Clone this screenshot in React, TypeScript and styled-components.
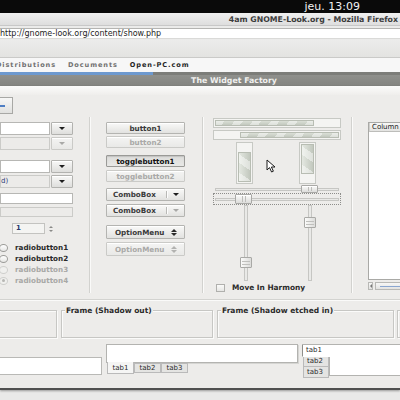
import React from "react";
import styled, { createGlobalStyle, css } from "styled-components";

const Global = createGlobalStyle`
  html, body { margin: 0; padding: 0; background: #e9e9e8; }
  * { box-sizing: border-box; }
`;

const Screen = styled.div`
  position: relative;
  width: 400px;
  height: 400px;
  overflow: hidden;
  background: #e9e9e8;
  font-family: "DejaVu Sans", "Liberation Sans", sans-serif;
  display: flex;
  flex-direction: column;
`;

const TopPanel = styled.div`
  flex: none;
  height: 13px;
  background: #0a0a0a;
  color: #f2f2f2;
  font-size: 11px;
  line-height: 13px;
  display: flex;
  justify-content: flex-end;
  padding-right: 40px;
  white-space: nowrap;
`;

const BrowserTitle = styled.div`
  flex: none;
  height: 13px;
  background: linear-gradient(#f0f0f0, #dedede);
  border-bottom: 1px solid #c8c8c8;
  display: flex;
  justify-content: flex-end;
  align-items: center;
  padding-right: 2px;
  font-size: 7.8px;
  font-weight: bold;
  color: #3c3c3c;
  white-space: nowrap;
`;

const UrlBar = styled.div`
  flex: none;
  height: 14px;
  background: #ebebea;
  padding-top: 2px;
`;

const UrlField = styled.div`
  height: 11px;
  background: #fff;
  border-top: 1px solid #b4b4b2;
  border-bottom: 1px solid #dadad8;
  font-size: 8px;
  line-height: 9px;
  color: #1e1e1e;
  white-space: nowrap;
`;

const Toolbar = styled.div`
  flex: none;
  height: 18px;
  background: linear-gradient(#ececeb, #e3e3e1);
  border-bottom: 1px solid #cacac8;
`;

const Bookmarks = styled.div`
  flex: none;
  height: 14px;
  background: #f7f7f7;
  display: flex;
  align-items: center;
  gap: 12px;
  margin-left: -4px;
  white-space: nowrap;
`;

const Bookmark = styled.span<{ $active?: boolean }>`
  font-size: 6.6px;
  font-weight: bold;
  letter-spacing: 0.9px;
  color: ${(p) => (p.$active ? "#1f1f1f" : "#707070")};
`;

const LoadStrip = styled.div`
  flex: none;
  height: 3px;
  background: #7c7d79;
  display: flex;
`;

const LoadBlue = styled.div`
  width: 153px;
  background: #6d99cf;
`;

const WindowTitle = styled.div`
  flex: none;
  height: 11px;
  background: linear-gradient(#8f908c, #838480);
  color: #f1f1ef;
  font-size: 7.8px;
  font-weight: bold;
  display: flex;
  justify-content: center;
  align-items: center;
  padding-left: 68px;
  white-space: nowrap;
`;

const WindowBody = styled.div`
  flex: none;
  height: 304px;
  background: #edecea;
  border-bottom: 2px solid #505050;
  box-shadow: 0 1px 2px rgba(0, 0, 0, 0.35);
  display: flex;
  flex-direction: column;
  color: #2b2b2b;
  font-size: 7.2px;
  font-weight: bold;
`;

const MenuStrip = styled.div`
  flex: none;
  height: 9px;
  background: linear-gradient(#fbfbfa, #efeeec);
`;

const ToolRow = styled.div`
  flex: none;
  height: 22px;
  display: flex;
  align-items: flex-start;
  padding-top: 2px;
`;

const ToolBtn = styled.div`
  margin-left: -8px;
  width: 21px;
  height: 17px;
  border: 1px solid #a8a8a5;
  background: linear-gradient(#f7f7f6, #e1e1df);
  display: flex;
  align-items: center;
  padding-left: 6px;
`;

const BlueDash = styled.div`
  width: 6px;
  height: 2px;
  background: #4f7fc4;
`;

const MainRow = styled.div`
  flex: none;
  height: 176px;
  display: flex;
`;

const VSep = styled.div<{ $ml: number; $mr: number }>`
  flex: none;
  width: 2px;
  margin-left: ${(p) => p.$ml}px;
  margin-right: ${(p) => p.$mr}px;
  border-left: 1px solid #d2d2cf;
  border-right: 1px solid #fafaf9;
`;

const Column = styled.div<{ $w?: number }>`
  flex: ${(p) => (p.$w ? "none" : "1")};
  width: ${(p) => (p.$w ? `${p.$w}px` : "auto")};
  display: flex;
  flex-direction: column;
  min-width: 0;
`;

/* ---------- left column ---------- */

const ComboRow = styled.div<{ $mt: number }>`
  display: flex;
  gap: 1px;
  height: 13px;
  margin-top: ${(p) => p.$mt}px;
`;

const Field = styled.div<{ $w: number; $h?: number; $off?: boolean; $mt?: number }>`
  flex: none;
  width: ${(p) => p.$w}px;
  height: ${(p) => p.$h ?? 13}px;
  margin-top: ${(p) => p.$mt ?? 0}px;
  background: ${(p) => (p.$off ? "#ecebe9" : "#ffffff")};
  border: 1px solid ${(p) => (p.$off ? "#cbcbc8" : "#b7b7b4")};
  font-size: 7px;
  font-weight: normal;
  color: #2d3f78;
  line-height: 11px;
  white-space: nowrap;
  overflow: hidden;
`;

const DropBtn = styled.div<{ $off?: boolean }>`
  flex: none;
  width: 22px;
  height: 13px;
  border: 1px solid ${(p) => (p.$off ? "#cacac7" : "#b2b2af")};
  border-radius: 1px;
  background: ${(p) =>
    p.$off ? "linear-gradient(#f3f3f2, #e8e8e6)" : "linear-gradient(#f8f8f7, #dededc)"};
  box-shadow: inset 0 1px #fff;
  display: flex;
  align-items: center;
  justify-content: center;
`;

const DownArrow = styled.div<{ $off?: boolean }>`
  width: 0;
  height: 0;
  border-left: 3px solid transparent;
  border-right: 3px solid transparent;
  border-top: 3px solid ${(p) => (p.$off ? "#a9a9a7" : "#1e1e1e")};
`;

const SpinRow = styled.div`
  display: flex;
  align-items: center;
  height: 11px;
  margin-top: 6px;
  padding-left: 12px;
  gap: 4px;
`;

const SpinField = styled.div`
  width: 33px;
  height: 11px;
  background: #f4f4f2;
  border: 1px solid #c3c3c0;
  font-size: 7px;
  font-weight: bold;
  color: #2a3a6e;
  line-height: 9px;
  padding-left: 3px;
`;

const SpinArrows = styled.div`
  display: flex;
  flex-direction: column;
  gap: 2px;
`;

const TinyTri = styled.div<{ $up?: boolean; $color?: string }>`
  width: 0;
  height: 0;
  border-left: 2px solid transparent;
  border-right: 2px solid transparent;
  ${(p) =>
    p.$up
      ? css`border-bottom: 2px solid ${p.$color ?? "#8a8a88"};`
      : css`border-top: 2px solid ${p.$color ?? "#8a8a88"};`}
`;

const RadioList = styled.div`
  margin-top: 8px;
  margin-left: -1px;
  display: flex;
  flex-direction: column;
`;

const RadioRow = styled.div<{ $off?: boolean }>`
  height: 11px;
  display: flex;
  align-items: center;
  gap: 7px;
  color: ${(p) => (p.$off ? "#a8a8a6" : "#2a2a2a")};
`;

const RadioDot = styled.div<{ $off?: boolean; $on?: boolean }>`
  width: 9px;
  height: 8px;
  border-radius: 50%;
  border: 1px solid ${(p) => (p.$off ? "#cfcfcc" : "#9c9c99")};
  background: ${(p) => (p.$off ? "#f0f0ee" : "linear-gradient(#ffffff, #e6e6e4)")};
  display: flex;
  align-items: center;
  justify-content: center;
  &::after {
    content: "";
    width: 3px;
    height: 3px;
    border-radius: 50%;
    background: ${(p) => (p.$on ? "#b7b7b4" : "transparent")};
  }
`;

/* ---------- middle column ---------- */

const Button = styled.div<{ $mt: number; $h?: number; $off?: boolean; $pressed?: boolean }>`
  height: ${(p) => p.$h ?? 12}px;
  margin-top: ${(p) => p.$mt}px;
  border: 1px solid ${(p) => (p.$pressed ? "#9a9a97" : p.$off ? "#cacac7" : "#b4b4b1")};
  border-radius: 1px;
  background: ${(p) =>
    p.$pressed
      ? "linear-gradient(#dcdcda, #e8e8e6)"
      : p.$off
      ? "linear-gradient(#f4f4f3, #e9e9e7)"
      : "linear-gradient(#f9f9f8, #e2e2e0)"};
  box-shadow: ${(p) => (p.$pressed ? "inset 0 1px 1px rgba(0,0,0,0.12)" : "inset 0 1px #fff")};
  color: ${(p) => (p.$off ? "#a9a9a7" : p.$pressed ? "#121212" : "#3a3a3a")};
  font-size: 7.2px;
  display: flex;
  align-items: center;
  justify-content: center;
  white-space: nowrap;
`;

const ComboBtn = styled(Button)`
  justify-content: flex-start;
  padding-left: 6px;
`;

const ComboLabel = styled.span`
  flex: 1;
`;

const ComboSep = styled.div`
  align-self: stretch;
  margin: 2px 0;
  width: 2px;
  border-left: 1px solid #b9b9b6;
  border-right: 1px solid #fdfdfd;
`;

const ComboArrowBox = styled.div`
  width: 16px;
  display: flex;
  justify-content: center;
`;

const OptionBtn = styled(Button)`
  justify-content: space-between;
  padding: 0 7px 0 8px;
`;

const UpDown = styled.div`
  display: flex;
  flex-direction: column;
  gap: 1px;
`;

const MidTri = styled.div<{ $up?: boolean; $off?: boolean }>`
  width: 0;
  height: 0;
  border-left: 3px solid transparent;
  border-right: 3px solid transparent;
  ${(p) =>
    p.$up
      ? css`border-bottom: 3px solid ${p.$off ? "#b2b2b0" : "#2a2a2a"};`
      : css`border-top: 3px solid ${p.$off ? "#b2b2b0" : "#2a2a2a"};`}
`;

/* ---------- sliders column ---------- */

const fillPattern = css`
  background: repeating-linear-gradient(
      125deg,
      rgba(255, 255, 255, 0.45) 0 7px,
      rgba(255, 255, 255, 0) 7px 15px
    ),
    linear-gradient(#dadfd6, #c2c8be);
`;

const fillPatternV = css`
  background: repeating-linear-gradient(
      35deg,
      rgba(255, 255, 255, 0.45) 0 7px,
      rgba(255, 255, 255, 0) 7px 15px
    ),
    linear-gradient(90deg, #e4e8e1, #c2c8be);
`;

const HProgress = styled.div<{ $mt: number; $rtl?: boolean }>`
  height: 10px;
  margin-top: ${(p) => p.$mt}px;
  border: 1px solid #c7c9c4;
  background: #f4f4f2;
  display: flex;
  justify-content: ${(p) => (p.$rtl ? "flex-end" : "flex-start")};
  padding: 1px;
`;

const HFill = styled.div`
  height: 100%;
  border: 1px solid #b8bdb3;
  ${fillPattern}
`;

const VProgRow = styled.div`
  height: 42px;
  margin-top: 2px;
  display: flex;
  padding-left: 23px;
  gap: 46px;
`;

const VProgress = styled.div<{ $fromTop?: boolean }>`
  width: 17px;
  height: 42px;
  border: 1px solid #c7c9c4;
  background: #f4f4f2;
  display: flex;
  flex-direction: column;
  justify-content: ${(p) => (p.$fromTop ? "flex-start" : "flex-end")};
  padding: 1px;
`;

const VFill = styled.div`
  width: 100%;
  border: 1px solid #b8bdb3;
  ${fillPatternV}
`;

const HScale = styled.div<{ $mt?: number }>`
  position: relative;
  height: 8px;
  margin-top: ${(p) => p.$mt ?? 0}px;
  display: flex;
  align-items: center;
  padding: 0 2px;
`;

const HTrough = styled.div`
  flex: 1;
  height: 3px;
  border: 1px solid #c6c6c3;
  background: #e9e9e7;
`;

const HHandle = styled.div<{ $w?: number; $h?: number }>`
  position: absolute;
  top: 0;
  width: ${(p) => p.$w ?? 17}px;
  height: ${(p) => p.$h ?? 8}px;
  border: 1px solid #a9a9a6;
  border-radius: 1px;
  background: linear-gradient(#fbfbfa, #dcdcda);
  box-shadow: inset 0 1px #fff;
  display: flex;
  justify-content: center;
  gap: 2px;
  padding: 1px 0;
  &::before,
  &::after {
    content: "";
    width: 1px;
    background: #bdbdba;
  }
`;

const FocusBox = styled.div`
  height: 12px;
  border: 1px dotted #8e8e8b;
  position: relative;
  display: flex;
  align-items: center;
  padding: 0 1px;
`;

const VScales = styled.div`
  height: 76px;
  display: flex;
  padding-left: 27px;
  gap: 52px;
`;

const VScale = styled.div`
  position: relative;
  width: 12px;
  height: 76px;
  display: flex;
  justify-content: center;
`;

const VTrough = styled.div`
  width: 4px;
  height: 100%;
  border: 1px solid #c6c6c3;
  background: #e9e9e7;
`;

const VHandle = styled.div`
  position: absolute;
  left: 0;
  width: 12px;
  height: 11px;
  border: 1px solid #a9a9a6;
  border-radius: 1px;
  background: linear-gradient(90deg, #fbfbfa, #dcdcda);
  display: flex;
  flex-direction: column;
  justify-content: center;
  gap: 2px;
  padding: 0 1px;
  &::before,
  &::after {
    content: "";
    height: 1px;
    background: #c0c0bd;
  }
`;

const CheckRow = styled.div`
  height: 9px;
  margin-top: 2px;
  display: flex;
  align-items: center;
  gap: 7px;
  padding-left: 3px;
  font-size: 7.4px;
  color: #2b2b2b;
  white-space: nowrap;
`;

const CheckBox = styled.div`
  width: 9px;
  height: 8px;
  border: 1px solid #b0b0ad;
  background: linear-gradient(#fafaf9, #e6e6e4);
`;

/* ---------- tree column ---------- */

const TreeBox = styled.div`
  margin-top: 5px;
  height: 158px;
  border: 1px solid #a9a9a6;
  border-right: none;
  background: #fff;
  display: flex;
  flex-direction: column;
`;

const TreeHeader = styled.div`
  height: 9px;
  background: linear-gradient(#f7f7f6, #e3e3e1);
  border-bottom: 1px solid #bdbdba;
  border-left: 1px solid #cfcfcc;
  font-size: 7px;
  font-weight: normal;
  color: #222;
  line-height: 8px;
  padding-left: 2px;
  white-space: nowrap;
`;

const ScrollBar = styled.div`
  margin-top: 2px;
  height: 8px;
  display: flex;
  gap: 2px;
`;

const ScrollBtn = styled.div`
  width: 13px;
  border: 1px solid #b8b8b5;
  background: linear-gradient(#f7f7f6, #e2e2e0);
  display: flex;
  align-items: center;
  justify-content: center;
`;

const LeftTri = styled.div`
  width: 0;
  height: 0;
  border-top: 2px solid transparent;
  border-bottom: 2px solid transparent;
  border-right: 2px solid #777;
`;

const ScrollThumb = styled.div`
  flex: 1;
  border: 1px solid #b8b8b5;
  border-right: none;
  background: linear-gradient(#f7f7f6, #e2e2e0);
  display: flex;
  align-items: center;
  padding-left: 4px;
  &::after {
    content: "";
    width: 20px;
    height: 1px;
    background: #8aa6d0;
  }
`;

/* ---------- bottom ---------- */

const HRule = styled.div`
  flex: none;
  margin-top: 6px;
  height: 2px;
  border-top: 1px solid #d3d3d0;
  border-bottom: 1px solid #fafaf9;
`;

const FramesRow = styled.div`
  flex: none;
  margin-top: 9px;
  height: 28px;
  display: flex;
  margin-left: -10px;
`;

const Frame = styled.div<{ $w: number; $ml: number }>`
  position: relative;
  flex: none;
  width: ${(p) => p.$w}px;
  margin-left: ${(p) => p.$ml}px;
  border: 1px solid #c7c7c4;
  box-shadow: inset 1px 1px #fbfbfa, 1px 1px #fbfbfa;
`;

const FrameLabel = styled.span`
  position: absolute;
  top: -5px;
  left: 3px;
  padding: 0 1px;
  background: #edecea;
  font-size: 7.5px;
  line-height: 9px;
  color: #2b2b2b;
  white-space: nowrap;
`;

const NotebookRow = styled.div`
  flex: none;
  margin-top: 6px;
  height: 34px;
  display: flex;
  margin-left: -5px;
`;

const BottomEntry = styled.div`
  flex: none;
  width: 107px;
  height: 18px;
  margin-top: 13px;
  background: #fff;
  border: 1px solid #b9b9b6;
`;

const NotebookBottom = styled.div`
  flex: none;
  margin-left: 4px;
  width: 192px;
  display: flex;
  flex-direction: column;
`;

const NbPage = styled.div<{ $h?: number }>`
  height: ${(p) => (p.$h ? `${p.$h}px` : "auto")};
  flex: ${(p) => (p.$h ? "none" : "1")};
  background: #fff;
  border: 1px solid #b3b3b0;
  box-shadow: 1px 1px #d5d5d2;
`;

const TabStrip = styled.div`
  display: flex;
  padding-left: 1px;
  align-items: flex-start;
`;

const Tab = styled.div<{ $active?: boolean }>`
  width: 27px;
  height: ${(p) => (p.$active ? 12 : 10)}px;
  margin-top: ${(p) => (p.$active ? -1 : 0)}px;
  background: ${(p) => (p.$active ? "#f5f5f4" : "#e4e4e2")};
  border: 1px solid #bababa;
  border-top: ${(p) => (p.$active ? "none" : "1px solid #bababa")};
  font-size: 7px;
  font-weight: normal;
  color: #2b2b2b;
  display: flex;
  align-items: ${(p) => (p.$active ? "flex-end" : "center")};
  justify-content: center;
  padding-bottom: ${(p) => (p.$active ? 1 : 0)}px;
`;

const NotebookSide = styled.div`
  flex: none;
  margin-left: 4px;
  flex-grow: 1;
  display: flex;
  border-top: 1px solid #b3b3b0;
`;

const SideTabs = styled.div`
  flex: none;
  width: 27px;
  display: flex;
  flex-direction: column;
`;

const SideTab = styled.div<{ $active?: boolean }>`
  height: ${(p) => (p.$active ? 12 : 11)}px;
  margin-left: ${(p) => (p.$active ? 0 : 1)}px;
  background: ${(p) => (p.$active ? "#fff" : "#e4e4e2")};
  border-left: 1px solid ${(p) => (p.$active ? "#8e8e8b" : "#bababa")};
  border-bottom: 1px solid ${(p) => (p.$active ? "transparent" : "#bababa")};
  border-right: ${(p) => (p.$active ? "none" : "1px solid #bababa")};
  font-size: 7px;
  font-weight: normal;
  color: #2b2b2b;
  display: flex;
  align-items: center;
  padding-left: 3px;
`;

const SidePage = styled.div`
  flex: 1;
  height: 31px;
  background: #fff;
  border-bottom: 1px solid #b3b3b0;
  position: relative;
  &::before {
    content: "";
    position: absolute;
    left: 0;
    top: 12px;
    bottom: 0;
    width: 1px;
    background: #b3b3b0;
  }
`;

const Cursor = styled.svg`
  position: absolute;
  left: 266px;
  top: 159px;
`;

export default function App() {
  return (
    <Screen>
      <Global />
      <TopPanel>jeu. 13:09</TopPanel>
      <BrowserTitle>4am GNOME-Look.org - Mozilla Firefox</BrowserTitle>
      <UrlBar>
        <UrlField>http://gnome-look.org/content/show.php</UrlField>
      </UrlBar>
      <Toolbar />
      <Bookmarks>
        <Bookmark>Distributions</Bookmark>
        <Bookmark>Documents</Bookmark>
        <Bookmark $active>Open-PC.com</Bookmark>
      </Bookmarks>
      <LoadStrip>
        <LoadBlue />
      </LoadStrip>
      <WindowTitle>The Widget Factory</WindowTitle>
      <WindowBody>
        <MenuStrip />
        <ToolRow>
          <ToolBtn>
            <BlueDash />
          </ToolBtn>
        </ToolRow>
        <MainRow>
          <Column $w={73}>
            <ComboRow $mt={5}>
              <Field $w={50} />
              <DropBtn>
                <DownArrow />
              </DropBtn>
            </ComboRow>
            <ComboRow $mt={2}>
              <Field $w={50} $off />
              <DropBtn $off>
                <DownArrow $off />
              </DropBtn>
            </ComboRow>
            <ComboRow $mt={10}>
              <Field $w={50} />
              <DropBtn>
                <DownArrow />
              </DropBtn>
            </ComboRow>
            <ComboRow $mt={2}>
              <Field $w={50} $off>d)</Field>
              <DropBtn>
                <DownArrow />
              </DropBtn>
            </ComboRow>
            <Field $w={73} $h={11} $mt={5} />
            <Field $w={73} $h={10} $mt={3} $off />
            <SpinRow>
              <SpinField>1</SpinField>
              <SpinArrows>
                <TinyTri $up />
                <TinyTri />
              </SpinArrows>
            </SpinRow>
            <RadioList>
              <RadioRow>
                <RadioDot />
                radiobutton1
              </RadioRow>
              <RadioRow>
                <RadioDot />
                radiobutton2
              </RadioRow>
              <RadioRow $off>
                <RadioDot $off />
                radiobutton3
              </RadioRow>
              <RadioRow $off>
                <RadioDot $off $on />
                radiobutton4
              </RadioRow>
            </RadioList>
          </Column>
          <VSep $ml={16} $mr={15} />
          <Column $w={79}>
            <Button $mt={5}>button1</Button>
            <Button $mt={2} $off>
              button2
            </Button>
            <Button $mt={7} $pressed>
              togglebutton1
            </Button>
            <Button $mt={3} $off>
              togglebutton2
            </Button>
            <ComboBtn $mt={6} $h={13}>
              <ComboLabel>ComboBox</ComboLabel>
              <ComboSep />
              <ComboArrowBox>
                <DownArrow />
              </ComboArrowBox>
            </ComboBtn>
            <ComboBtn $mt={3} $h={13}>
              <ComboLabel>ComboBox</ComboLabel>
              <ComboSep />
              <ComboArrowBox>
                <DownArrow $off />
              </ComboArrowBox>
            </ComboBtn>
            <OptionBtn $mt={8} $h={14}>
              OptionMenu
              <UpDown>
                <MidTri $up />
                <MidTri />
              </UpDown>
            </OptionBtn>
            <OptionBtn $mt={3} $h={14} $off>
              OptionMenu
              <UpDown>
                <MidTri $up $off />
                <MidTri $off />
              </UpDown>
            </OptionBtn>
          </Column>
          <VSep $ml={17} $mr={9} />
          <Column $w={128}>
            <HProgress $mt={1}>
              <HFill style={{ width: "80%" }} />
            </HProgress>
            <HProgress $mt={2} $rtl>
              <HFill style={{ width: "80%" }} />
            </HProgress>
            <VProgRow>
              <VProgress>
                <VFill style={{ height: "78%" }} />
              </VProgress>
              <VProgress $fromTop>
                <VFill style={{ height: "80%" }} />
              </VProgress>
            </VProgRow>
            <HScale $mt={1}>
              <HTrough />
              <HHandle style={{ left: 88 }} />
            </HScale>
            <FocusBox>
              <HTrough />
              <HHandle $h={10} style={{ left: 21, top: 0 }} />
            </FocusBox>
            <VScales>
              <VScale>
                <VTrough />
                <VHandle style={{ top: 52 }} />
              </VScale>
              <VScale>
                <VTrough />
                <VHandle style={{ top: 12 }} />
              </VScale>
            </VScales>
            <CheckRow>
              <CheckBox />
              Move In Harmony
            </CheckRow>
          </Column>
          <VSep $ml={10} $mr={15} />
          <Column>
            <TreeBox>
              <TreeHeader>Column</TreeHeader>
            </TreeBox>
            <ScrollBar>
              <ScrollBtn>
                <LeftTri />
              </ScrollBtn>
              <ScrollThumb />
            </ScrollBar>
          </Column>
        </MainRow>
        <HRule />
        <FramesRow>
          <Frame $w={67} $ml={0} />
          <Frame $w={152} $ml={4}>
            <FrameLabel>Frame (Shadow out)</FrameLabel>
          </Frame>
          <Frame $w={177} $ml={4}>
            <FrameLabel>Frame (Shadow etched in)</FrameLabel>
          </Frame>
          <Frame $w={60} $ml={3} />
        </FramesRow>
        <NotebookRow>
          <BottomEntry />
          <NotebookBottom>
            <NbPage $h={19} />
            <TabStrip>
              <Tab $active>tab1</Tab>
              <Tab>tab2</Tab>
              <Tab>tab3</Tab>
            </TabStrip>
          </NotebookBottom>
          <NotebookSide>
            <SideTabs>
              <SideTab $active>tab1</SideTab>
              <SideTab>tab2</SideTab>
              <SideTab>tab3</SideTab>
            </SideTabs>
            <SidePage />
          </NotebookSide>
        </NotebookRow>
      </WindowBody>
      <Cursor width="12" height="14" viewBox="0 0 12 14">
        <path
          d="M1 1 L1 11 L3.5 8.6 L5.6 13 L7.4 12.2 L5.4 8 L9 8 Z"
          fill="#ffffff"
          stroke="#1a1a1a"
          strokeWidth="1"
          strokeLinejoin="round"
        />
      </Cursor>
    </Screen>
  );
}
